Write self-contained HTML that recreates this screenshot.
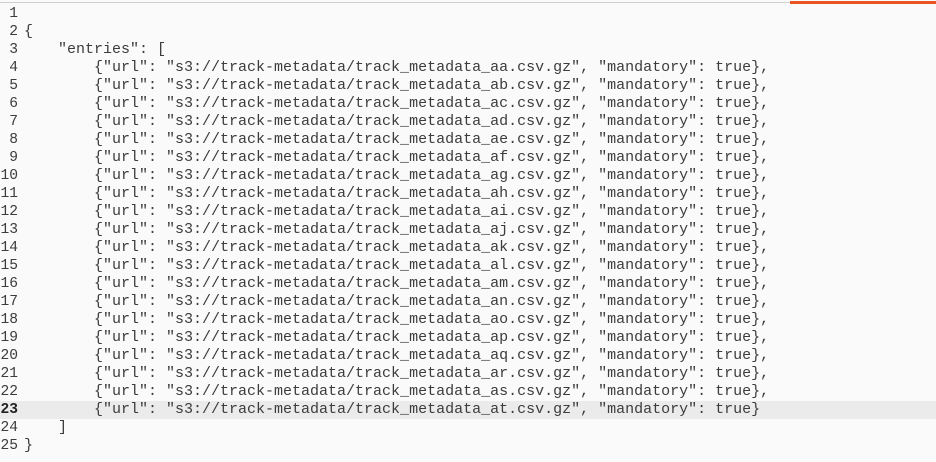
<!DOCTYPE html>
<html><head><style>
body{margin:0;width:936px;height:462px;background:#fafafa;overflow:hidden;position:relative;font-family:"Liberation Mono",monospace;font-size:15px;color:#3c3c3c}
.top{position:absolute;left:0;top:2px;width:936px;height:1px;background:#d0d0d0}
.or{position:absolute;left:790px;top:1px;width:146px;height:3px;background:#e95420}
.ln{position:absolute;left:0;height:18px;line-height:18px;width:936px;white-space:pre}
.n{position:absolute;left:0;width:18px;text-align:right;font-size:14.6px}
.t{position:absolute;left:22px}
.b .t{left:24px}
.cur{background:#ebebeb}
.cur .n{font-weight:bold;color:#222}
</style></head><body>
<div class="top"></div><div class="or"></div>
<div id="c"></div>
<script>
var L=['','{','    "entries": ['];
var s='abcdefghijklmnopqrst';
for(var i=0;i<20;i++)L.push('        {"url": "s3://track-metadata/track_metadata_a'+s[i]+'.csv.gz", "mandatory": true}'+(i<19?',':''));
L.push('    ]','}');
var h='';
for(var i=0;i<L.length;i++){h+='<div class="ln'+(i==22?' cur':'')+(i==1||i==24?' b':'')+'" style="top:'+(5+i*18)+'px"><span class="n">'+(i+1)+'</span><span class="t">'+L[i].replace(/&/g,'&amp;').replace(/</g,'&lt;')+'</span></div>';}
document.getElementById('c').innerHTML=h;
</script>
</body></html>
